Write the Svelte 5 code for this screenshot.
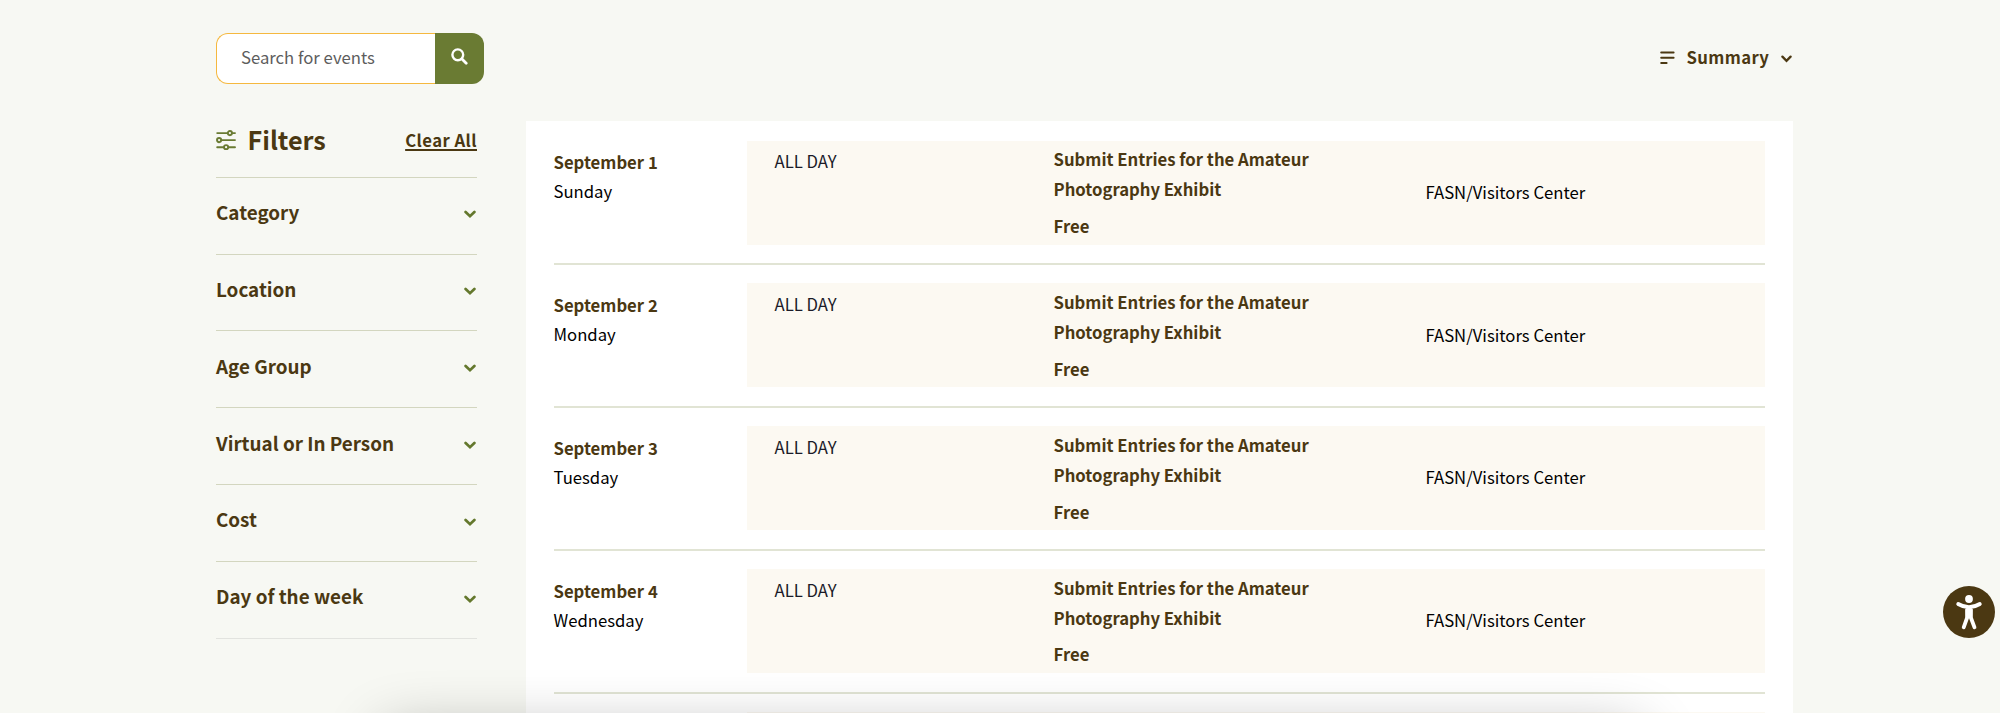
<script lang="ts">
  const filters = ['Category', 'Location', 'Age Group', 'Virtual or In Person', 'Cost', 'Day of the week'];

  const events = [
    { date: 'September 1', day: 'Sunday' },
    { date: 'September 2', day: 'Monday' },
    { date: 'September 3', day: 'Tuesday' },
    { date: 'September 4', day: 'Wednesday' }
  ].map((entry) => ({
    ...entry,
    time: 'ALL DAY',
    title: 'Submit Entries for the Amateur Photography Exhibit',
    price: 'Free',
    location: 'FASN/Visitors Center'
  }));

  let query = $state('');
  let open = $state<string | null>(null);

  function toggle(name: string) {
    open = open === name ? null : name;
  }
</script>

<div class="page">
  <header class="toolbar">
    <form class="search" onsubmit={(event) => event.preventDefault()}>
      <input type="text" placeholder="Search for events" aria-label="Search for events" bind:value={query} />
      <button type="submit" aria-label="Search">
        <svg width="17" height="17" viewBox="0 0 17 17" fill="none" stroke="#fff">
          <circle cx="6.8" cy="6.8" r="5.4" stroke-width="2.4" />
          <path d="M11 11 15.2 15.2" stroke-width="2.8" stroke-linecap="round" />
        </svg>
      </button>
    </form>

    <button class="view" type="button">
      <svg width="15" height="14" viewBox="0 0 15 14" stroke="currentColor" stroke-width="2" stroke-linecap="round">
        <path d="M1.2 1.5H13.6M1.2 6.8H13.6M1.2 12.1H6.6" />
      </svg>
      <span>Summary</span>
      <svg class="chevron" width="11" height="8" viewBox="0 0 11 8" fill="none" stroke="currentColor" stroke-width="2.3" stroke-linecap="round">
        <path d="M1.4 1.6 5.5 5.8 9.6 1.6" />
      </svg>
    </button>
  </header>

  <div class="content">
    <aside class="sidebar">
      <div class="sidebar-head">
        <svg width="20" height="20" viewBox="0 0 20 20" fill="none" stroke="#6a7b33" stroke-width="1.9" stroke-linecap="round">
          <path d="M1.2 3.1H11.3M16.5 3.1H19M5.6 10.1H19M1.2 17.2H7.5M12.6 17.2H19" />
          <circle cx="13.9" cy="3.1" r="2.1" />
          <circle cx="3.1" cy="10.1" r="2.1" />
          <circle cx="10.1" cy="17.2" r="2.1" />
        </svg>
        <h2>Filters</h2>
        <a href="#clear">Clear All</a>
      </div>
      <ul>
        {#each filters as name}
          <li>
            <button type="button" aria-expanded={open === name} onclick={() => toggle(name)}>
              <span>{name}</span>
              <svg width="12" height="9" viewBox="0 0 12 9" fill="none" stroke="#64782d" stroke-width="2.7" stroke-linecap="round">
                <path d="M1.6 2 6 6.2 10.4 2" />
              </svg>
            </button>
          </li>
        {/each}
      </ul>
    </aside>

    <main class="events">
      {#each events as event}
        <article>
          <div class="when">
            <strong>{event.date}</strong>
            <span>{event.day}</span>
          </div>
          <div class="details">
            <div class="time">{event.time}</div>
            <div class="title">
              <h3>{event.title}</h3>
              <p>{event.price}</p>
            </div>
            <div class="location">{event.location}</div>
          </div>
        </article>
      {/each}
      <article>
        <div class="when"></div>
        <div class="details"></div>
      </article>
    </main>
  </div>

  <div class="bottom-shadow"></div>

  <button class="accessibility" type="button" aria-label="Accessibility options">
    <svg width="52" height="52" viewBox="0 0 52 52">
      <circle cx="26" cy="26" r="26" fill="#4b3812" />
      <circle cx="26" cy="13" r="3.9" fill="#fff" />
      <path d="M22.4 23 29.6 23 29.4 32 22.6 32Z" fill="#fff" />
      <path d="M15.2 18 Q26 24.5 36.8 18" fill="none" stroke="#fff" stroke-width="3.8" stroke-linecap="round" />
      <path d="M24.2 24V31.5L20.7 41.3M27.8 24V31.5L31.5 41.3" fill="none" stroke="#fff" stroke-width="3.8" stroke-linecap="round" stroke-linejoin="round" />
    </svg>
  </button>
</div>

<style>
  :global(body) {
    background: #f7f8f3;
  }

  .page {
    position: relative;
    box-sizing: border-box;
    height: 713px;
    padding: 32.5px 207px 0 216px;
    overflow: hidden;
    color: #000;
    font-family: 'Noto Sans CJK SC', 'Noto Sans', sans-serif;
    font-size: 16.7px;
  }

  button,
  input {
    padding: 0;
    border: 0;
    background: none;
    color: inherit;
    font: inherit;
    letter-spacing: inherit;
  }

  h2,
  h3,
  p,
  ul {
    margin: 0;
    padding: 0;
    list-style: none;
  }

  .toolbar {
    display: flex;
    justify-content: space-between;
    height: 51px;
  }

  .search {
    display: flex;
    width: 268px;
  }

  .search input {
    box-sizing: border-box;
    flex: 1;
    min-width: 0;
    padding: 0 0 3px 24px;
    border: 1.5px solid #f5b83f;
    border-right: 0;
    border-radius: 12px 0 0 12px;
    background: #fff;
  }

  .search input::placeholder {
    color: #5d5d5d;
    opacity: 1;
  }

  .search button {
    display: flex;
    align-items: center;
    justify-content: center;
    width: 49px;
    padding-bottom: 4px;
    border-radius: 0 12px 12px 0;
    background: #6a7b33;
  }

  .view {
    display: flex;
    align-items: center;
    color: #4b3812;
    font-weight: 700;
    letter-spacing: 0.35px;
  }

  .view span {
    margin: 0 12px 3px;
  }

  .view .chevron {
    margin: 1px 0.8px 0 0;
  }

  .content {
    display: flex;
    justify-content: space-between;
    margin-top: 37.5px;
  }

  .sidebar {
    width: 261px;
    color: #4b3812;
    font-weight: 700;
  }

  .sidebar-head {
    display: flex;
    align-items: center;
    height: 37px;
    padding-bottom: 18.7px;
    border-bottom: 1px solid #d3d6bf;
  }

  h2 {
    margin: -1px 0 0 11.5px;
    font-size: 25.2px;
    line-height: 38px;
  }

  .sidebar-head a {
    margin-left: auto;
    color: inherit;
    letter-spacing: 0.45px;
    text-decoration-thickness: 1.5px;
    text-underline-offset: 2px;
  }

  .sidebar li {
    height: 75.85px;
    border-bottom: 1px solid #d3d6bf;
  }

  .sidebar li:last-child {
    border-bottom-color: #e2e3df;
  }

  .sidebar li button {
    display: flex;
    align-items: center;
    justify-content: space-between;
    width: 100%;
    height: 67.6px;
    font-size: 18.85px;
  }

  .sidebar li svg {
    margin: 7px 0.6px 0 0;
  }

  .events {
    box-sizing: border-box;
    width: 1267.5px;
    padding: 1px 28px 0;
    background: #fff;
  }

  article {
    display: flex;
    padding: 18.55px 0 18.35px;
    border-bottom: 2px solid #e1e4d4;
  }

  .when {
    display: flex;
    flex-direction: column;
    width: 193px;
    padding-top: 7.7px;
    line-height: 28.6px;
  }

  strong,
  h3,
  p {
    color: #4b3812;
    font-size: 16.7px;
    font-weight: 700;
  }

  .details {
    display: grid;
    flex: 1;
    grid-template-columns: 279px 372px 1fr;
    box-sizing: border-box;
    height: 104px;
    padding-left: 28px;
    background: #fcf9f2;
    line-height: 29.8px;
  }

  .time {
    padding-top: 6.4px;
    color: #1b1b29;
  }

  .title {
    padding: 4.6px 60px 0 0;
  }

  .title p {
    margin-top: 7px;
  }

  .location {
    align-self: center;
  }

  .bottom-shadow {
    position: absolute;
    top: 733px;
    left: 384px;
    width: 1256px;
    height: 100px;
    box-shadow: 0 0 60px rgba(0, 0, 0, 0.32);
    pointer-events: none;
  }

  .accessibility {
    position: absolute;
    top: 586px;
    right: 5px;
    width: 52px;
    height: 52px;
  }

  .accessibility svg {
    display: block;
  }
</style>
